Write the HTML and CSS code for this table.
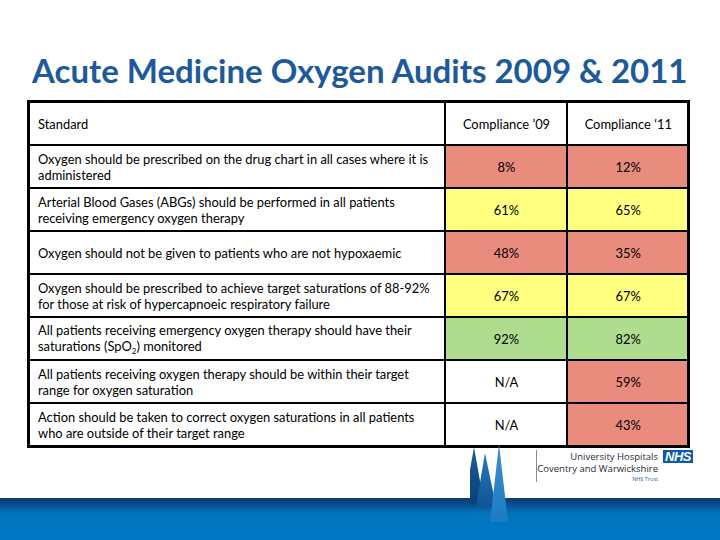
FILE: index.html
```html
<!DOCTYPE html>
<html>
<head>
<meta charset="utf-8">
<link rel="stylesheet" href="styles.css">
</head>
<body>
<div class="slide">
  <h1 class="title">Acute Medicine Oxygen Audits 2009 &amp; 2011</h1>
  <table class="audit">
    <colgroup><col class="c-std"><col class="c-val"><col class="c-val"></colgroup>
    <tr class="head">
      <td class="std">Standard</td><td>Compliance ’09</td><td>Compliance ‘11</td>
    </tr>
    <tr>
      <td class="std">Oxygen should be prescribed on the drug chart in all cases where it is<br>administered</td>
      <td class="red">8%</td><td class="red">12%</td>
    </tr>
    <tr>
      <td class="std">Arterial Blood Gases (ABGs) should be performed in all patients<br>receiving emergency oxygen therapy</td>
      <td class="yellow">61%</td><td class="yellow">65%</td>
    </tr>
    <tr>
      <td class="std">Oxygen should not be given to patients who are not hypoxaemic</td>
      <td class="red">48%</td><td class="red">35%</td>
    </tr>
    <tr>
      <td class="std">Oxygen should be prescribed to achieve target saturations of 88-92%<br>for those at risk of hypercapnoeic respiratory failure</td>
      <td class="yellow">67%</td><td class="yellow">67%</td>
    </tr>
    <tr>
      <td class="std">All patients receiving emergency oxygen therapy should have their<br>saturations (SpO<span class="sub">2</span>) monitored</td>
      <td class="green">92%</td><td class="green">82%</td>
    </tr>
    <tr>
      <td class="std">All patients receiving oxygen therapy should be within their target<br>range for oxygen saturation</td>
      <td>N/A</td><td class="red">59%</td>
    </tr>
    <tr>
      <td class="std">Action should be taken to correct oxygen saturations in all patients<br>who are outside of their target range</td>
      <td>N/A</td><td class="red">43%</td>
    </tr>
  </table>
  <div class="footer">
    <div class="logo">
      <div class="logo-text">
        <div class="l1">University Hospitals</div>
        <div class="l2">Coventry and Warwickshire</div>
        <div class="l3">NHS Trust</div>
      </div>
      <div class="nhs">NHS</div>
    </div>
    <svg class="spikes" width="60" height="90" viewBox="0 0 60 90">
      <defs>
        <linearGradient id="g1" x1="0" y1="0" x2="0" y2="1">
          <stop offset="0" stop-color="#1a5d9e"/><stop offset="1" stop-color="#0b3f78"/>
        </linearGradient>
        <linearGradient id="g2" x1="0" y1="0" x2="0" y2="1">
          <stop offset="0" stop-color="#2b78b8"/><stop offset="1" stop-color="#0f5596"/>
        </linearGradient>
        <linearGradient id="g3" x1="0" y1="0" x2="0" y2="1">
          <stop offset="0" stop-color="#3f8fcc"/><stop offset="1" stop-color="#1a7cc4"/>
        </linearGradient>
      </defs>
      <polygon points="4,3 -6,60 14,60" fill="url(#g1)"/>
      <polygon points="15,9 6,62 26,62" fill="url(#g2)"/>
      <polygon points="29,0 20,78 38,78" fill="url(#g3)"/>
    </svg>
  </div>
  <div class="band"></div>
</div>
</body>
</html>
```
FILE: styles.css
```css
html, body {
  margin: 0;
  padding: 0;
  background: #ffffff;
}
.slide {
  width: 720px;
  height: 540px;
  position: relative;
  overflow: hidden;
  display: flex;
  flex-direction: column;
  font-family: Lato, "Open Sans", sans-serif;
}
.title {
  margin: 0;
  padding: 50px 0 0 32px;
  height: 50px;
  font-family: Lato, "Open Sans", sans-serif;
  font-weight: 700;
  font-size: 33px;
  line-height: 40px;
  color: #1d5a9b;
  white-space: nowrap;
}
.audit {
  margin-left: 27px;
  width: 659px;
  border-collapse: collapse;
  border: 3px solid #000;
  table-layout: fixed;
  font-size: 12.9px;
  color: #000;
}
.c-std { width: 416px; }
.c-val { width: 122px; }
.audit td {
  border: 2px solid #000;
  height: 41px;
  padding: 0 6px 0 8px;
  text-align: center;
  vertical-align: middle;
  line-height: 16px;
  white-space: nowrap;
}
.audit td.std {
  text-align: left;
  padding-left: 8px;
}
.sub {
  font-size: 8px;
  position: relative;
  top: 3px;
}
.red { background: #e98b7d; }
.yellow { background: #ffff80; }
.green { background: #aedd8f; }
.footer {
  position: relative;
  flex: 1;
}
.logo {
  display: flex;
  align-items: flex-start;
  justify-content: flex-end;
  padding: 2px 27px 0 0;
  gap: 5px;
}
.logo-text {
  border-left: 1px solid #8a8a8a;
  padding-top: 1px;
  text-align: right;
  color: #2a2a38;
  font-family: "Open Sans", sans-serif;
  height: 31px;
}
.l1, .l2 {
  font-size: 9.5px;
  line-height: 12px;
}
.l3 {
  font-size: 5.5px;
  line-height: 8px;
  color: #1f5ea8;
}
.nhs {
  background: #0d5ab4;
  color: #fff;
  font-family: "Liberation Sans", Arial, sans-serif;
  font-weight: 700;
  font-style: italic;
  font-size: 13px;
  line-height: 13px;
  padding: 0 2px;
  letter-spacing: -0.5px;
}
.spikes {
  position: absolute;
  left: 470px;
  top: -4px;
}
.band {
  height: 42px;
  flex: none;
  background: linear-gradient(to bottom, #0a3c73 0px, #0b4a88 6px, #0a63a8 11px, #0076bf 16px, #0078c1 42px);
}
```
